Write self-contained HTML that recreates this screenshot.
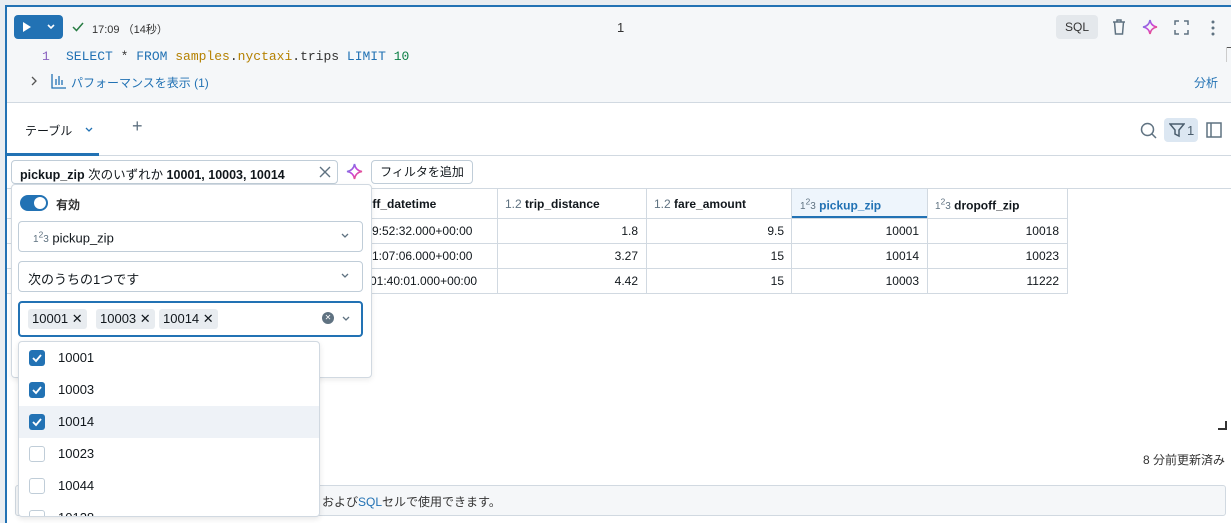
<!DOCTYPE html>
<html><head><meta charset="utf-8"><style>
*{box-sizing:border-box;margin:0;padding:0}
body{width:1231px;height:523px;overflow:hidden;background:#fff;font-family:"Liberation Sans","Noto Sans CJK JP",sans-serif;color:#11171c;position:relative}
.a{position:absolute}
.mono{font-family:"Liberation Mono","Noto Sans CJK JP",monospace}
.t{font-size:12px;white-space:nowrap}
</style></head><body>
<div class="a" style="left:0;top:0;width:1231px;height:5px;background:#e9edf1"></div>
<div class="a" style="left:0;top:0;width:5px;height:523px;background:#e9edf1"></div>
<div class="a" style="left:5px;top:5px;width:1226px;height:518px;border-top:2px solid #2272b4;border-left:2px solid #2272b4"></div>
<div class="a" style="left:7px;top:7px;width:1224px;height:96px;background:#f5f7f9;border-bottom:1px solid #d1d9e1"></div>
<div class="a" style="left:14px;top:15px;width:49px;height:24px;background:#2272b4;border-radius:4px"></div>
<svg class="a" style="left:22px;top:21px" width="36" height="12"><path d="M1 1 L9 6 L1 11Z" fill="#fff"/><path d="M26 4 L29 7 L32 4" stroke="#fff" stroke-width="1.6" fill="none"/></svg>
<svg class="a" style="left:71px;top:20px" width="14" height="14"><path d="M2 7 L5.5 10.5 L12 3" stroke="#277c43" stroke-width="1.5" fill="none"/></svg>
<div class="a t" style="left:92px;top:21px;font-size:11px;color:#333">17:09 （14秒）</div>
<div class="a t" style="left:617px;top:20px;font-size:13px;color:#333">1</div>
<div class="a" style="left:1056px;top:15px;width:42px;height:24px;background:#e4e8ec;border-radius:4px;font-size:12px;text-align:center;line-height:24px;color:#333">SQL</div>
<svg class="a" style="left:1110px;top:18px" width="18" height="18" fill="none" stroke="#5f7281" stroke-width="1.5"><path d="M3 4h12M7 4V2h4v2M4.5 4l1 12h7l1-12"/></svg>
<svg class="a" style="left:1142px;top:19px" width="16" height="16"><defs><linearGradient id="g" x1="0" y1="0" x2="1" y2="1"><stop offset="0" stop-color="#4299e0"/><stop offset=".5" stop-color="#ca42e0"/><stop offset="1" stop-color="#ff5f46"/></linearGradient></defs><path d="M8 1 Q9 7 15 8 Q9 9 8 15 Q7 9 1 8 Q7 7 8 1Z" fill="none" stroke="url(#g)" stroke-width="1.6"/></svg>
<svg class="a" style="left:1174px;top:20px" width="15" height="15" fill="none" stroke="#5f7281" stroke-width="1.5"><path d="M1 5V1h4M10 1h4v4M14 10v4h-4M5 14H1v-4"/></svg>
<svg class="a" style="left:1210px;top:19px" width="6" height="18" fill="#5f7281"><circle cx="3" cy="3" r="1.5"/><circle cx="3" cy="9" r="1.5"/><circle cx="3" cy="15" r="1.5"/></svg>
<div class="a" style="left:1226px;top:47px;width:5px;height:1px;background:#555"></div>
<div class="a" style="left:1226px;top:47px;width:1px;height:15px;background:#ccc"></div>
<div class="a mono t" style="left:42px;top:49px;font-size:13px;color:#8a63bf">1</div>
<div class="a mono t" style="left:66px;top:49px;font-size:13px;color:#333"><span style="color:#2272b4">SELECT</span> * <span style="color:#2272b4">FROM</span> <span style="color:#b58100">samples</span>.<span style="color:#b58100">nyctaxi</span>.trips <span style="color:#2272b4">LIMIT</span> <span style="color:#0b7f45">10</span></div>
<svg class="a" style="left:30px;top:76px" width="8" height="10"><path d="M2 1 L6 5 L2 9" stroke="#555" stroke-width="1.3" fill="none"/></svg>
<svg class="a" style="left:51px;top:73px" width="16" height="16" fill="none" stroke="#2272b4" stroke-width="1.3"><path d="M1 1v14h14M5 12V6M8 12V3M11 12V7"/></svg>
<div class="a t" style="left:71px;top:74px;color:#2272b4">パフォーマンスを表示 (1)</div>
<div class="a t" style="left:1194px;top:74px;color:#2272b4">分析</div>
<div class="a t" style="left:25px;top:122px;color:#11171c">テーブル</div>
<svg class="a" style="left:84px;top:126px" width="10" height="8"><path d="M2 2 L5 5 L8 2" stroke="#2272b4" stroke-width="1.3" fill="none"/></svg>
<div class="a" style="left:132px;top:116px;font-size:18px;color:#5f7281">+</div>
<div class="a" style="left:7px;top:155px;width:1224px;height:1px;background:#d1d9e1"></div>
<div class="a" style="left:7px;top:153px;width:92px;height:3px;background:#2272b4"></div>
<svg class="a" style="left:1140px;top:122px" width="17" height="17" fill="none" stroke="#5f7281" stroke-width="1.5"><circle cx="7.5" cy="7.5" r="6"/><path d="M12 12l4 4"/></svg>
<div class="a" style="left:1164px;top:118px;width:34px;height:24px;background:#dce7f2;border-radius:4px"></div>
<svg class="a" style="left:1169px;top:122px" width="16" height="16" fill="none" stroke="#4a5d6d" stroke-width="1.5"><path d="M1 2h14l-5 6v6l-4-2V8z"/></svg>
<div class="a t" style="left:1187px;top:123px;font-size:13px;color:#4a5d6d">1</div>
<svg class="a" style="left:1206px;top:122px" width="16" height="16" fill="none" stroke="#5f7281" stroke-width="1.5"><rect x="1" y="1" width="14" height="14"/><path d="M5 1v14"/></svg>
<div class="a" style="left:11px;top:160px;width:327px;height:24px;border:1px solid #c0cdd8;border-radius:4px"></div>
<div class="a t" style="left:20px;top:164px;font-size:12.5px"><b>pickup_zip</b> 次のいずれか <b>10001, 10003, 10014</b></div>
<svg class="a" style="left:318px;top:165px" width="14" height="14"><path d="M2 2L12 12M12 2L2 12" stroke="#5f7281" stroke-width="1.4"/></svg>
<svg class="a" style="left:346px;top:163px" width="17" height="17"><path d="M8.5 1 Q9.5 7.5 16 8.5 Q9.5 9.5 8.5 16 Q7.5 9.5 1 8.5 Q7.5 7.5 8.5 1Z" fill="none" stroke="url(#g)" stroke-width="1.6"/></svg>
<div class="a" style="left:371px;top:160px;width:102px;height:24px;border:1px solid #c0cdd8;border-radius:4px;font-size:12px;line-height:22px;text-align:center">フィルタを追加</div>
<div class="a" style="left:7px;top:188px;width:1224px;height:1px;background:#d1d9e1"></div>
<div class="a" style="left:7px;top:189px;width:1061px;height:105px;border-bottom:1px solid #d1d9e1;border-right:1px solid #d1d9e1"></div>
<div class="a" style="left:7px;top:218px;width:1061px;height:1px;background:#d1d9e1"></div>
<div class="a" style="left:7px;top:243px;width:1061px;height:1px;background:#d1d9e1"></div>
<div class="a" style="left:7px;top:268px;width:1061px;height:1px;background:#d1d9e1"></div>
<div class="a" style="left:497px;top:189px;width:1px;height:105px;background:#d1d9e1"></div>
<div class="a" style="left:646px;top:189px;width:1px;height:105px;background:#d1d9e1"></div>
<div class="a" style="left:791px;top:189px;width:1px;height:105px;background:#d1d9e1"></div>
<div class="a" style="left:927px;top:189px;width:1px;height:105px;background:#d1d9e1"></div>
<div class="a" style="left:792px;top:189px;width:135px;height:29px;background:#eef5fc;border-bottom:2px solid #2272b4"></div>
<div class="a t" style="left:365px;top:197px;font-weight:bold">off_datetime</div>
<div class="a t" style="left:505px;top:197px"><span style="color:#5f7281">1.2</span> <b>trip_distance</b></div>
<div class="a t" style="left:654px;top:197px"><span style="color:#5f7281">1.2</span> <b>fare_amount</b></div>
<div class="a t" style="left:800px;top:197px;color:#2272b4"><span style="font-size:10px;color:#5f7281">1<sup>2</sup>3</span> <b>pickup_zip</b></div>
<div class="a t" style="left:935px;top:197px"><span style="font-size:10px;color:#5f7281">1<sup>2</sup>3</span> <b>dropoff_zip</b></div>
<div class="a t" style="left:372px;top:224px">9:52:32.000+00:00</div>
<div class="a t" style="left:372px;top:249px">1:07:06.000+00:00</div>
<div class="a t" style="left:370px;top:274px">01:40:01.000+00:00</div>
<div class="a t" style="right:593px;top:224px">1.8</div><div class="a t" style="right:593px;top:249px">3.27</div><div class="a t" style="right:593px;top:274px">4.42</div>
<div class="a t" style="right:447px;top:224px">9.5</div><div class="a t" style="right:447px;top:249px">15</div><div class="a t" style="right:447px;top:274px">15</div>
<div class="a t" style="right:312px;top:224px">10001</div><div class="a t" style="right:312px;top:249px">10014</div><div class="a t" style="right:312px;top:274px">10003</div>
<div class="a t" style="right:172px;top:224px">10018</div><div class="a t" style="right:172px;top:249px">10023</div><div class="a t" style="right:172px;top:274px">11222</div>
<div class="a" style="left:1218px;top:428px;width:9px;height:2px;background:#333"></div>
<div class="a" style="left:1225px;top:421px;width:2px;height:9px;background:#333"></div>
<div class="a t" style="right:6px;top:451px;color:#333">8 分前更新済み</div>
<div class="a" style="left:15px;top:485px;width:1211px;height:31px;background:#f5f7f9;border:1px solid #d1d9e1;border-radius:3px"></div>
<div class="a t" style="left:322px;top:493px;color:#333">および<span style="color:#2272b4">SQL</span>セルで使用できます。</div>
<div class="a" style="left:11px;top:184px;width:361px;height:194px;background:#fff;border:1px solid #d1d9e1;border-radius:4px;box-shadow:0 2px 6px rgba(0,0,0,.08)"></div>
<div class="a" style="left:20px;top:195px;width:28px;height:16px;border-radius:8px;background:#2272b4"></div>
<div class="a" style="left:34px;top:197px;width:12px;height:12px;border-radius:6px;background:#fff"></div>
<div class="a t" style="left:56px;top:196px;font-weight:bold;color:#333">有効</div>
<div class="a" style="left:18px;top:221px;width:345px;height:31px;border:1px solid #c0cdd8;border-radius:4px"></div>
<div class="a t" style="left:33px;top:230px;font-size:13px"><span style="font-size:10px;color:#5f7281">1<sup>2</sup>3</span> pickup_zip</div>
<svg class="a" style="left:340px;top:232px" width="10" height="8"><path d="M2 2L5 5L8 2" stroke="#5f7281" stroke-width="1.3" fill="none"/></svg>
<div class="a" style="left:18px;top:261px;width:345px;height:31px;border:1px solid #c0cdd8;border-radius:4px"></div>
<div class="a t" style="left:28px;top:269px;font-size:13px">次のうちの1つです</div>
<svg class="a" style="left:340px;top:272px" width="10" height="8"><path d="M2 2L5 5L8 2" stroke="#5f7281" stroke-width="1.3" fill="none"/></svg>
<div class="a" style="left:18px;top:301px;width:345px;height:36px;border:2px solid #2272b4;border-radius:4px"></div>
<div class="a t" style="left:28px;top:309px;height:20px;padding:0 4px;background:#e8ecf0;border-radius:3px;font-size:13px;line-height:20px">10001 ✕</div>
<div class="a t" style="left:96px;top:309px;height:20px;padding:0 4px;background:#e8ecf0;border-radius:3px;font-size:13px;line-height:20px">10003 ✕</div>
<div class="a t" style="left:159px;top:309px;height:20px;padding:0 4px;background:#e8ecf0;border-radius:3px;font-size:13px;line-height:20px">10014 ✕</div>
<div class="a" style="left:322px;top:312px;width:12px;height:12px;border-radius:6px;background:#5f7281;color:#fff;font-size:8px;text-align:center;line-height:12px">✕</div>
<svg class="a" style="left:341px;top:315px" width="10" height="8"><path d="M2 2L5 5L8 2" stroke="#5f7281" stroke-width="1.3" fill="none"/></svg>
<div class="a" style="left:18px;top:341px;width:302px;height:176px;background:#fff;border:1px solid #d1d9e1;border-radius:4px;overflow:hidden;box-shadow:0 2px 6px rgba(0,0,0,.1)">
<div class="a" style="left:0;top:64px;width:300px;height:32px;background:#eef2f7"></div>
<div class="a" style="left:10px;top:8px;width:16px;height:16px;border-radius:3px;background:#2272b4"></div>
<div class="a" style="left:10px;top:40px;width:16px;height:16px;border-radius:3px;background:#2272b4"></div>
<div class="a" style="left:10px;top:72px;width:16px;height:16px;border-radius:3px;background:#2272b4"></div>
<svg class="a" style="left:10px;top:8px" width="16" height="16"><path d="M4 8L7 11L12 5" stroke="#fff" stroke-width="1.8" fill="none"/></svg>
<svg class="a" style="left:10px;top:40px" width="16" height="16"><path d="M4 8L7 11L12 5" stroke="#fff" stroke-width="1.8" fill="none"/></svg>
<svg class="a" style="left:10px;top:72px" width="16" height="16"><path d="M4 8L7 11L12 5" stroke="#fff" stroke-width="1.8" fill="none"/></svg>
<div class="a" style="left:10px;top:104px;width:16px;height:16px;border-radius:3px;border:1px solid #c0cdd8"></div>
<div class="a" style="left:10px;top:136px;width:16px;height:16px;border-radius:3px;border:1px solid #c0cdd8"></div>
<div class="a" style="left:10px;top:168px;width:16px;height:16px;border-radius:3px;border:1px solid #c0cdd8"></div>
<div class="a t" style="left:39px;top:8px;font-size:13px">10001</div>
<div class="a t" style="left:39px;top:40px;font-size:13px">10003</div>
<div class="a t" style="left:39px;top:72px;font-size:13px">10014</div>
<div class="a t" style="left:39px;top:104px;font-size:13px">10023</div>
<div class="a t" style="left:39px;top:136px;font-size:13px">10044</div>
<div class="a t" style="left:39px;top:168px;font-size:13px">10128</div>
</div>
</body></html>
